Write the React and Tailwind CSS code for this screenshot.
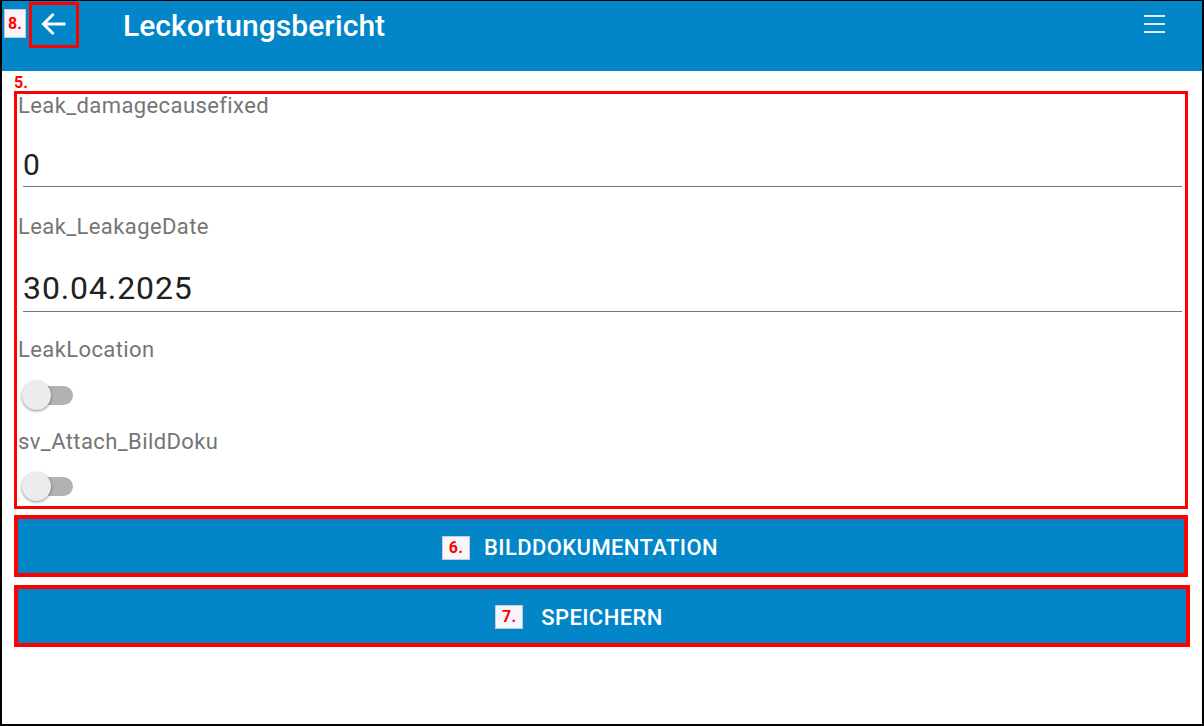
import React from "react";

function Switch() {
  return (
    <div className="relative h-[30px] w-[52px] ml-[5px]">
      <div className="absolute left-[4px] top-[6px] h-[19px] w-[47px] rounded-full bg-[#b2b2b2]" />
      <div className="absolute left-0 top-[1px] h-[29px] w-[29px] rounded-full bg-[#ececec] shadow-[0_1px_3px_rgba(0,0,0,0.45)]" />
    </div>
  );
}

function Tag({ children, className = "h-[24px] w-[28px]" }) {
  return (
    <span className={"inline-flex items-center justify-center bg-[#f7f7fb] border border-[#c9c9d6] text-[#ff0000] font-bold text-[16px] leading-none " + className}>
      {children}
    </span>
  );
}

export default function App() {
  return (
    <div
      className="relative w-[1204px] h-[726px] bg-white border-l-2 border-r-2 border-b-2 border-t border-black overflow-hidden"
      style={{ fontFamily: "Roboto, 'Noto Sans', sans-serif" }}
    >
      <header className="h-[70px] bg-[#0286c8]">
        <div className="relative flex items-center h-[46px]">
          <div className="absolute left-[2px] top-[8px]">
            <Tag className="h-[29px] w-[22px]">8.</Tag>
          </div>
          <div className="ml-[27px] mt-[1px] h-[46px] w-[50px] border-[3px] border-[#ff0000] flex items-center justify-center">
            <svg width="26" height="24" viewBox="0 0 26 24" fill="none" className="-mt-[2px]">
              <path d="M24.5 12H2.5M12.5 2L2.5 12L12.5 22" stroke="white" strokeWidth="3" strokeLinecap="butt" strokeLinejoin="miter" />
            </svg>
          </div>
          <h1 className="ml-[44px] mt-[3px] text-white text-[30px] font-medium leading-none tracking-[0.05px]">
            Leckortungsbericht
          </h1>
          <div className="ml-auto mr-[37px] flex flex-col gap-[6px] w-[21px]">
            <span className="block h-[2px] bg-[#d9ecf7]" />
            <span className="block h-[2px] bg-[#d9ecf7]" />
            <span className="block h-[2px] bg-[#d9ecf7]" />
          </div>
        </div>
      </header>

      <div className="px-[12px]">
        <div className="h-[20px] text-[#ff0000] font-bold text-[16px] leading-[20px] pt-[2px]">5.</div>
        <div className="border-[3px] border-[#ff0000] h-[418px] w-[1174px] flex flex-col">
          <div className="ml-[1px] mt-[1px] text-[22px] leading-[22px] tracking-[0.4px] text-[#757575]">Leak_damagecausefixed</div>
          <div className="ml-[6px] mr-[3px] mt-[30px] h-[40px] border-b border-[#757575] text-[30px] leading-[36px] text-[#212121]">0</div>
          <div className="ml-[1px] mt-[29px] text-[22px] leading-[22px] tracking-[0.4px] text-[#757575]">Leak_LeakageDate</div>
          <div className="ml-[6px] mr-[3px] mt-[32px] h-[42px] border-b border-[#757575] text-[32px] leading-[36px] text-[#212121] tracking-[0.9px]">30.04.2025</div>
          <div className="ml-[1px] mt-[27px] text-[22px] leading-[22px] tracking-[0.4px] text-[#757575]">LeakLocation</div>
          <div className="mt-[19px]"><Switch /></div>
          <div className="ml-[1px] mt-[21px] text-[22px] leading-[22px] tracking-[0.4px] text-[#757575]">sv_Attach_BildDoku</div>
          <div className="mt-[18px]"><Switch /></div>
        </div>

        <div className="mt-[6px] w-[1174px] h-[62px] border-4 border-[#ff0000]">
          <button className="w-full h-full bg-[#0286c8] flex items-center justify-center pt-[3px]">
            <span className="relative text-white text-[22px] font-medium tracking-[0.4px]">
              <span className="absolute right-full mr-[14px] top-1/2 -translate-y-1/2 flex"><Tag>6.</Tag></span>
              BILDDOKUMENTATION
            </span>
          </button>
        </div>

        <div className="mt-[8px] w-[1176px] h-[62px] border-4 border-[#ff0000]">
          <button className="w-full h-full bg-[#0286c8] flex items-center justify-center pt-[2px]">
            <span className="relative text-white text-[22px] font-medium tracking-[0.4px]">
              <span className="absolute right-full mr-[18px] top-1/2 -translate-y-1/2 flex"><Tag>7.</Tag></span>
              SPEICHERN
            </span>
          </button>
        </div>
      </div>
    </div>
  );
}
